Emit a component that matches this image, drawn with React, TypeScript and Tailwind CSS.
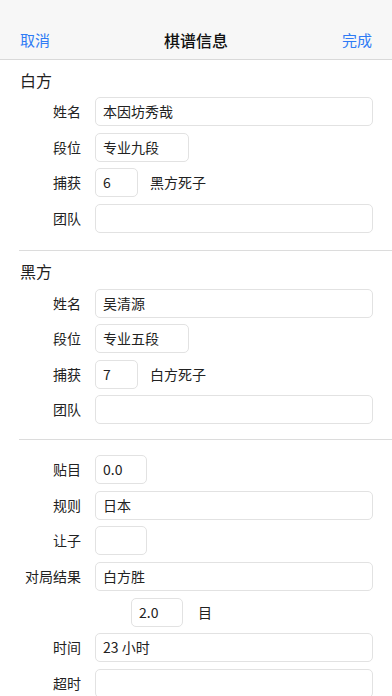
import React from "react";

const font = { fontFamily: '"Noto Sans CJK SC", "Noto Sans", sans-serif' };

function Box({ w, value }: { w: string; value?: string }) {
  return (
    <div
      className={`${w} h-[29px] rounded-[5px] border border-[#e2e2e2] bg-white flex items-center pl-[7px] text-[14px] text-[#222]`}
    >
      {value}
    </div>
  );
}

function Row({ label, children }: { label?: string; children: React.ReactNode }) {
  return (
    <div className="flex items-center">
      <div className="w-[81px] text-right text-[14px] text-[#222]">{label}</div>
      <div className="ml-[14px] flex items-center flex-1 pr-[19px]">{children}</div>
    </div>
  );
}

export default function App() {
  return (
    <div className="w-[392px] h-[696px] overflow-hidden bg-white" style={font}>
      <div className="h-[60px] bg-[#f7f7f7] border-b border-[#d9d9d9] pt-[20px]">
        <div className="h-[40px] flex items-center justify-between px-[20px]">
          <span className="text-[15px] text-[#2f7bf5]">取消</span>
          <span className="text-[16px] font-medium text-[#111]">棋谱信息</span>
          <span className="text-[15px] text-[#2f7bf5]">完成</span>
        </div>
      </div>

      <div className="pt-[9px] pb-[17px]">
        <div className="pl-[20px] text-[16px] leading-[22px] text-[#222]">白方</div>
        <div className="mt-[6px] flex flex-col gap-[6.7px]">
          <Row label="姓名"><Box w="flex-1" value="本因坊秀哉" /></Row>
          <Row label="段位"><Box w="w-[94px]" value="专业九段" /></Row>
          <Row label="捕获">
            <Box w="w-[43px]" value="6" />
            <span className="ml-[12px] text-[14px] text-[#222]">黑方死子</span>
          </Row>
          <Row label="团队"><Box w="flex-1" /></Row>
        </div>
      </div>
      <div className="ml-[19px] h-px bg-[#dcdcdc]" />

      <div className="pt-[9px] pb-[15px]">
        <div className="pl-[20px] text-[16px] leading-[22px] text-[#222]">黑方</div>
        <div className="mt-[7px] flex flex-col gap-[6.3px]">
          <Row label="姓名"><Box w="flex-1" value="吴清源" /></Row>
          <Row label="段位"><Box w="w-[94px]" value="专业五段" /></Row>
          <Row label="捕获">
            <Box w="w-[43px]" value="7" />
            <span className="ml-[12px] text-[14px] text-[#222]">白方死子</span>
          </Row>
          <Row label="团队"><Box w="flex-1" /></Row>
        </div>
      </div>
      <div className="ml-[19px] h-px bg-[#dcdcdc]" />

      <div className="pt-[15px]">
        <div className="flex flex-col gap-[6.7px]">
          <Row label="贴目"><Box w="w-[52px]" value="0.0" /></Row>
          <Row label="规则"><Box w="flex-1" value="日本" /></Row>
          <Row label="让子"><Box w="w-[52px]" /></Row>
          <Row label="对局结果"><Box w="flex-1" value="白方胜" /></Row>
          <Row>
            <div className="ml-[36px] flex items-center">
              <Box w="w-[52px]" value="2.0" />
              <span className="ml-[15px] text-[14px] text-[#222]">目</span>
            </div>
          </Row>
          <Row label="时间"><Box w="flex-1" value="23 小时" /></Row>
          <Row label="超时"><Box w="flex-1" /></Row>
        </div>
      </div>
    </div>
  );
}
